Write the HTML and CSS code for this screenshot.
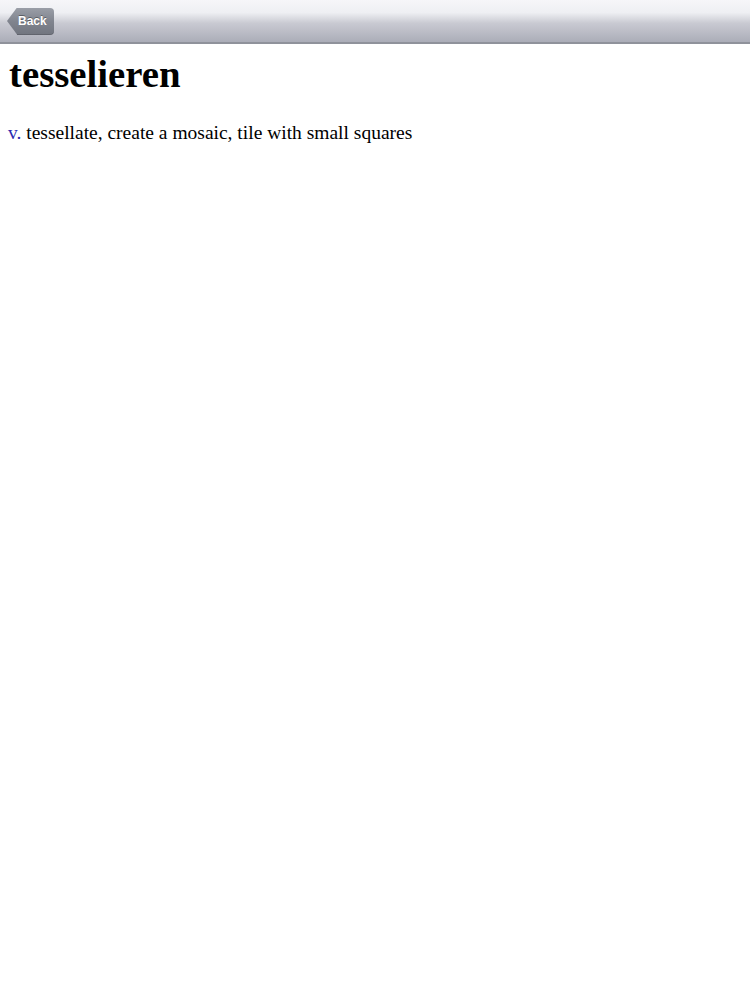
FILE: index.html
```html
<!DOCTYPE html>
<html>
<head>
<meta charset="utf-8">
<link rel="stylesheet" href="styles.css">
</head>
<body>
<div class="navbar">
  <div class="back-btn"><span class="back-label">Back</span></div>
</div>
<div class="content">
  <h1 class="word">tesselieren</h1>
  <p class="def"><span class="pos">v.</span> tessellate, create a mosaic, tile with small squares</p>
</div>
</body>
</html>
```

FILE: styles.css
```css
html, body {
  margin: 0;
  padding: 0;
  background: #ffffff;
}
body {
  width: 750px;
  font-family: "Liberation Serif", "Times New Roman", serif;
  color: #000;
}
.navbar {
  height: 42px;
  background: linear-gradient(to bottom, #f6f6f9 0%, #eeeff3 30%, #c9cad2 55%, #abadb8 100%);
  border-bottom: 2px solid #8f929b;
  display: flex;
  align-items: center;
  padding-left: 8px;
  box-sizing: content-box;
}
.back-btn {
  position: relative;
  height: 27px;
  margin-left: 9px;
  padding: 0 7px 0 1px;
  display: flex;
  align-items: center;
  background: linear-gradient(to bottom, #9a9ea7 0%, #80848e 50%, #71757f 100%);
  border-radius: 0 4px 4px 0;
  box-shadow: inset 0 -1px 0 rgba(0,0,0,0.15);
}
.back-btn::before {
  content: "";
  position: absolute;
  left: -10px;
  top: 0;
  width: 10px;
  height: 27px;
  background: linear-gradient(to bottom, #9a9ea7 0%, #80848e 50%, #71757f 100%);
  clip-path: polygon(100% 0, 0 50%, 100% 100%);
}
.back-label {
  font-family: "Liberation Sans", Arial, sans-serif;
  font-weight: bold;
  font-size: 12px;
  color: #fff;
  text-shadow: 0 -1px 0 rgba(0,0,0,0.35);
}
.content {
  padding: 0 8px;
}
.word {
  margin: 10px 0 0 1px;
  font-size: 38.8px;
  font-weight: bold;
  line-height: 40px;
}
.def {
  margin: 27px 0 0;
  font-size: 19.5px;
  line-height: 24px;
}
.pos {
  color: #2b2bb0;
}
```
